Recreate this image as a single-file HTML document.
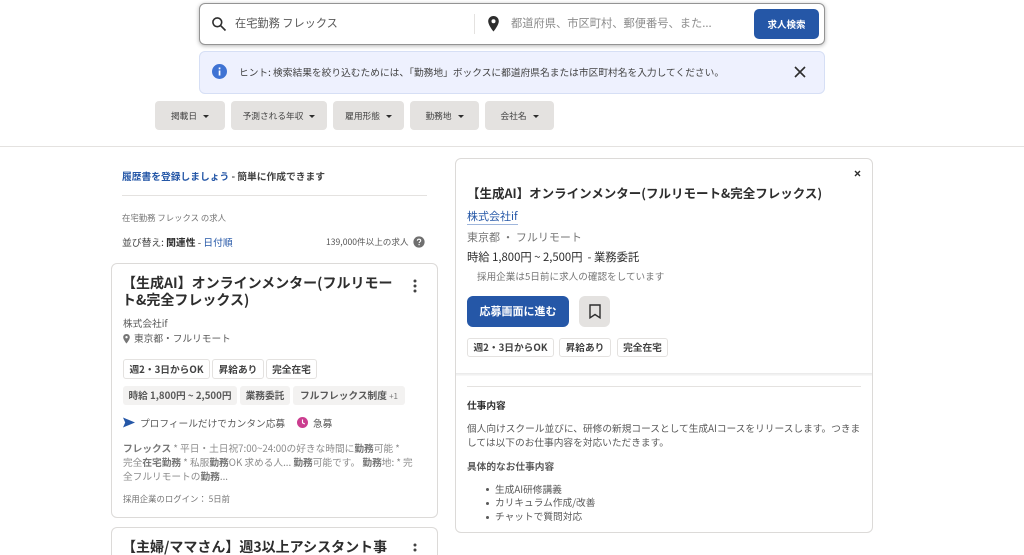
<!DOCTYPE html>
<html lang="ja"><head><meta charset="utf-8"><title>求人検索</title>
<style>
html,body{margin:0;padding:0;background:#fff;width:1024px;height:555px;overflow:hidden}
body{font-family:"Noto Sans CJK JP","Liberation Sans",sans-serif;color:#2d2d2d;position:relative}
#w{position:absolute;left:0;top:0;width:1024px;height:555px;overflow:hidden;filter:blur(.35px)}
.a{position:absolute;box-sizing:border-box}
.t{position:absolute;white-space:nowrap;line-height:1.3}
.f{position:absolute;top:101px;height:29px;background:#e4e2e0;border-radius:4px;font-size:8.7px;color:#424242;line-height:29px;text-align:center}
.f i{display:inline-block;border:3px solid transparent;border-top:3.5px solid #2d2d2d;border-bottom:0;margin-left:6px;vertical-align:1.5px}
.card{position:absolute;background:#fff;border:1px solid #dcdad8;border-radius:6px;box-sizing:border-box}
.tag{position:absolute;height:20px;border:1px solid #e4e2e0;border-radius:3px;font-size:9.7px;font-weight:700;color:#424242;line-height:18px;text-align:center;box-sizing:border-box;white-space:nowrap}
.g{position:absolute;height:19px;background:#f3f2f1;border-radius:3px;font-size:9.7px;font-weight:700;color:#595959;line-height:19px;text-align:center;white-space:nowrap}
b{font-weight:700}
</style></head><body><div id="w">

<!-- search -->
<div class="a" style="left:199px;top:3px;width:626px;height:42px;background:#fff;border:1px solid #949494;border-radius:6px;box-shadow:0 1px 4px rgba(0,0,0,.3)"></div>
<svg class="a" style="left:211px;top:16px" width="16" height="16" viewBox="0 0 16 16" fill="none" stroke="#2d2d2d" stroke-width="1.6"><circle cx="6.3" cy="6.3" r="4.4"/><path d="M9.6 9.6L14.5 14.5"/></svg>
<div class="t" style="left:235px;top:16px;font-size:11.2px;color:#595959">在宅勤務 フレックス</div>
<div class="a" style="left:474px;top:14px;width:1px;height:20px;background:#e4e2e0"></div>
<svg class="a" style="left:487px;top:15px" width="13" height="18" viewBox="0 0 13 18"><path fill="#2d2d2d" fill-rule="evenodd" d="M6.5 1C3.5 1 1.2 3.3 1.2 6.2c0 3.900 5.300 10.300 5.300 10.300s5.300-6.400 5.300-10.300C11.800 3.300 9.500 1 6.500 1zm0 7.200a2 2 0 1 1 0-4 2 2 0 0 1 0 4z"/></svg>
<div class="t" style="left:511px;top:16px;font-size:11.25px;color:#8c8c8c">都道府県、市区町村、郵便番号、また...</div>
<div class="a" style="left:754px;top:9px;width:65px;height:30px;background:#2557a7;border-radius:5px;color:#fff;font-size:9.5px;font-weight:700;line-height:30px;text-align:center">求人検索</div>

<!-- hint -->
<div class="a" style="left:199px;top:51px;width:626px;height:43px;background:#eef1fe;border:1px solid #d6dff5;border-radius:6px"></div>
<svg class="a" style="left:212px;top:64px" width="15" height="15" viewBox="0 0 15 15"><circle cx="7.500" cy="7.500" r="7.500" fill="#3f73d3"/><rect x="6.700" y="6.500" width="1.700" height="5" fill="#fff"/><rect x="6.700" y="3.500" width="1.700" height="1.800" fill="#fff"/></svg>
<div class="t" style="left:239px;top:66px;font-size:9.72px;color:#424242">ヒント: 検索結果を絞り込むためには、「勤務地」ボックスに都道府県名または市区町村名を入力してください。</div>
<svg class="a" style="left:794px;top:66px" width="12" height="12" viewBox="0 0 12 12" stroke="#2d2d2d" stroke-width="1.600"><path d="M1 1L11 11M11 1L1 11"/></svg>

<!-- filters -->
<div class="f" style="left:155px;width:70px">掲載日<i></i></div>
<div class="f" style="left:231px;width:96px">予測される年収<i></i></div>
<div class="f" style="left:333px;width:71px">雇用形態<i></i></div>
<div class="f" style="left:410px;width:69px">勤務地<i></i></div>
<div class="f" style="left:485px;width:69px">会社名<i></i></div>
<div class="a" style="left:0;top:146px;width:1024px;height:1px;background:#e4e2e0"></div>

<!-- left column -->
<div class="t" style="left:122px;top:170px;font-size:9.75px;font-weight:700;color:#424242"><span style="color:#2557a7">履歴書を登録しましょう</span> - 簡単に作成できます</div>
<div class="a" style="left:122px;top:195px;width:305px;height:1px;background:#e4e2e0"></div>
<div class="t" style="left:122px;top:213px;font-size:8.4px;color:#767676">在宅勤務 フレックス の求人</div>
<div class="t" style="left:122px;top:236px;font-size:9.8px;color:#424242">並び替え: <b style="color:#2d2d2d">関連性</b> - <span style="color:#2557a7">日付順</span></div>
<div class="t" style="left:326px;top:237px;font-size:8.6px;color:#595959">139,000件以上の求人</div>
<svg class="a" style="left:413px;top:236px" width="12" height="12" viewBox="0 0 12 12"><circle cx="6" cy="6" r="5.600" fill="#6f6f6f"/><path d="M4.300 4.700C4.400 3.700 5.100 3.200 6 3.200c1 0 1.700.6 1.700 1.400 0 1.200-1.600 1.200-1.600 2.500" fill="none" stroke="#fff" stroke-width="1.100"/><rect x="5.500" y="8" width="1.200" height="1.200" fill="#fff"/></svg>

<!-- card 1 -->
<div class="card" style="left:111px;top:263px;width:327px;height:255px"></div>
<div class="t" style="left:122px;top:275px;font-size:14px;font-weight:700;line-height:16.5px;white-space:normal;width:275px;color:#2d2d2d">【生成AI】オンラインメンター(フルリモート&amp;完全フレックス)</div>
<svg class="a" style="left:412px;top:279px" width="6" height="14" viewBox="0 0 6 14" fill="#424242"><circle cx="3" cy="2" r="1.500"/><circle cx="3" cy="7" r="1.500"/><circle cx="3" cy="12" r="1.500"/></svg>
<div class="t" style="left:123px;top:317px;font-size:9.7px;color:#595959">株式会社if</div>
<svg class="a" style="left:123px;top:334px" width="7" height="10" viewBox="0 0 7 10"><path fill="#767676" fill-rule="evenodd" d="M3.500 0C1.600 0 .2 1.400.2 3.200c0 2.400 3.300 6.300 3.300 6.300s3.300-3.900 3.300-6.300C6.800 1.400 5.400 0 3.500 0zm0 4.400a1.200 1.200 0 1 1 0-2.400 1.200 1.200 0 0 1 0 2.400z"/></svg>
<div class="t" style="left:134px;top:332px;font-size:9.7px;color:#595959">東京都・フルリモート</div>
<div class="tag" style="left:123px;top:359px;width:87px">週2・3日からOK</div>
<div class="tag" style="left:212px;top:359px;width:52px">昇給あり</div>
<div class="tag" style="left:266px;top:359px;width:51px">完全在宅</div>
<div class="g" style="left:123px;top:386px;width:114px">時給 1,800円 ~ 2,500円</div>
<div class="g" style="left:240px;top:386px;width:50px">業務委託</div>
<div class="g" style="left:293px;top:386px;width:112px">フルフレックス制度 <span style="font-size:8px;font-weight:400;color:#767676">+1</span></div>
<svg class="a" style="left:123px;top:417px" width="12" height="11" viewBox="0 0 12 11"><path fill="#2557a7" d="M0 .5L12 5.500 0 10.500 2.200 5.500z"/></svg>
<div class="t" style="left:140px;top:417px;font-size:9.7px;color:#595959">プロフィールだけでカンタン応募</div>
<svg class="a" style="left:297px;top:417px" width="11" height="11" viewBox="0 0 11 11"><circle cx="5.500" cy="5.500" r="5.500" fill="#cb3d8f"/><path d="M5.500 2.500V5.800L7.800 7" fill="none" stroke="#fff" stroke-width="1.100"/></svg>
<div class="t" style="left:313px;top:417px;font-size:9.7px;color:#595959">急募</div>
<div class="t" style="left:123px;top:441px;font-size:9.7px;line-height:14px;color:#8c8c8c"><b style="color:#767676">フレックス</b> * 平日・土日祝7:00~24:00の好きな時間に<b style="color:#767676">勤務</b>可能 *<br>完全<b style="color:#767676">在宅勤務</b> * 私服<b style="color:#767676">勤務</b>OK 求める人... <b style="color:#767676">勤務</b>可能です。 <b style="color:#767676">勤務</b>地: * 完<br>全フルリモートの<b style="color:#767676">勤務</b>...</div>
<div class="t" style="left:123px;top:494px;font-size:8.4px;color:#767676">採用企業のログイン： 5日前</div>

<!-- card 2 -->
<div class="card" style="left:111px;top:527px;width:327px;height:28px;border-bottom:0;border-radius:6px 6px 0 0"></div>
<div class="t" style="left:122px;top:539px;font-size:14px;font-weight:700;line-height:16px;color:#2d2d2d">【主婦/ママさん】週3以上アシスタント事</div>
<svg class="a" style="left:412px;top:543px" width="6" height="12" viewBox="0 0 6 12" fill="#424242"><circle cx="3" cy="2" r="1.500"/><circle cx="3" cy="7" r="1.500"/></svg>

<!-- right panel -->
<div class="card" style="left:455px;top:158px;width:418px;height:375px"></div>
<svg class="a" style="left:854px;top:170px" width="7" height="7" viewBox="0 0 7 7" stroke="#2d2d2d" stroke-width="1.400"><path d="M1 1L6 6M6 1L1 6"/></svg>
<div class="t" style="left:467px;top:185px;font-size:12.5px;font-weight:700;color:#2d2d2d">【生成AI】オンラインメンター(フルリモート&amp;完全フレックス)</div>
<div class="t" style="left:467px;top:209px;font-size:11px;color:#2557a7;border-bottom:1px solid #9fb6dc;line-height:15px">株式会社if</div>
<div class="t" style="left:467px;top:230px;font-size:11px;color:#767676">東京都 ・ フルリモート</div>
<div class="t" style="left:467px;top:250px;font-size:11.3px;color:#2d2d2d">時給 1,800円 ~ 2,500円&nbsp; - 業務委託</div>
<div class="t" style="left:477px;top:270px;font-size:9.6px;color:#767676">採用企業は5日前に求人の確認をしています</div>
<div class="a" style="left:467px;top:296px;width:102px;height:31px;background:#2557a7;border-radius:6px;color:#fff;font-size:11px;font-weight:700;line-height:31px;text-align:center">応募画面に進む</div>
<div class="a" style="left:579px;top:296px;width:31px;height:31px;background:#e4e2e0;border-radius:6px"></div>
<svg class="a" style="left:589px;top:304px" width="12" height="15" viewBox="0 0 12 15" fill="none" stroke="#2d2d2d" stroke-width="1.400"><path d="M1 1H11V13.800L6 10.500 1 13.800z"/></svg>
<div class="tag" style="left:467px;top:338px;width:87px;height:19px;line-height:17px">週2・3日からOK</div>
<div class="tag" style="left:559px;top:338px;width:52px;height:19px;line-height:17px">昇給あり</div>
<div class="tag" style="left:617px;top:338px;width:51px;height:19px;line-height:17px">完全在宅</div>
<div class="a" style="left:456px;top:373px;width:416px;height:3px;background:linear-gradient(#e8e8e8,#fafafa)"></div>
<div class="a" style="left:467px;top:386px;width:394px;height:1px;background:#e4e2e0"></div>
<div class="t" style="left:467px;top:399px;font-size:9.7px;font-weight:700;color:#2d2d2d">仕事内容</div>
<div class="t" style="left:467px;top:421px;font-size:9.7px;line-height:14px;color:#595959">個人向けスクール並びに、研修の新規コースとして生成AIコースをリリースします。つきま<br>しては以下のお仕事内容を対応いただきます。</div>
<div class="t" style="left:467px;top:460px;font-size:9.7px;font-weight:700;color:#595959">具体的なお仕事内容</div>
<div class="a" style="left:486px;top:488px;width:3px;height:3px;border-radius:50%;background:#595959"></div>
<div class="a" style="left:486px;top:502px;width:3px;height:3px;border-radius:50%;background:#595959"></div>
<div class="a" style="left:486px;top:516px;width:3px;height:3px;border-radius:50%;background:#595959"></div>
<div class="t" style="left:495px;top:482.500px;font-size:9.7px;line-height:13.7px;color:#595959">生成AI研修講義<br>カリキュラム作成/改善<br>チャットで質問対応</div>

</div></body></html>
